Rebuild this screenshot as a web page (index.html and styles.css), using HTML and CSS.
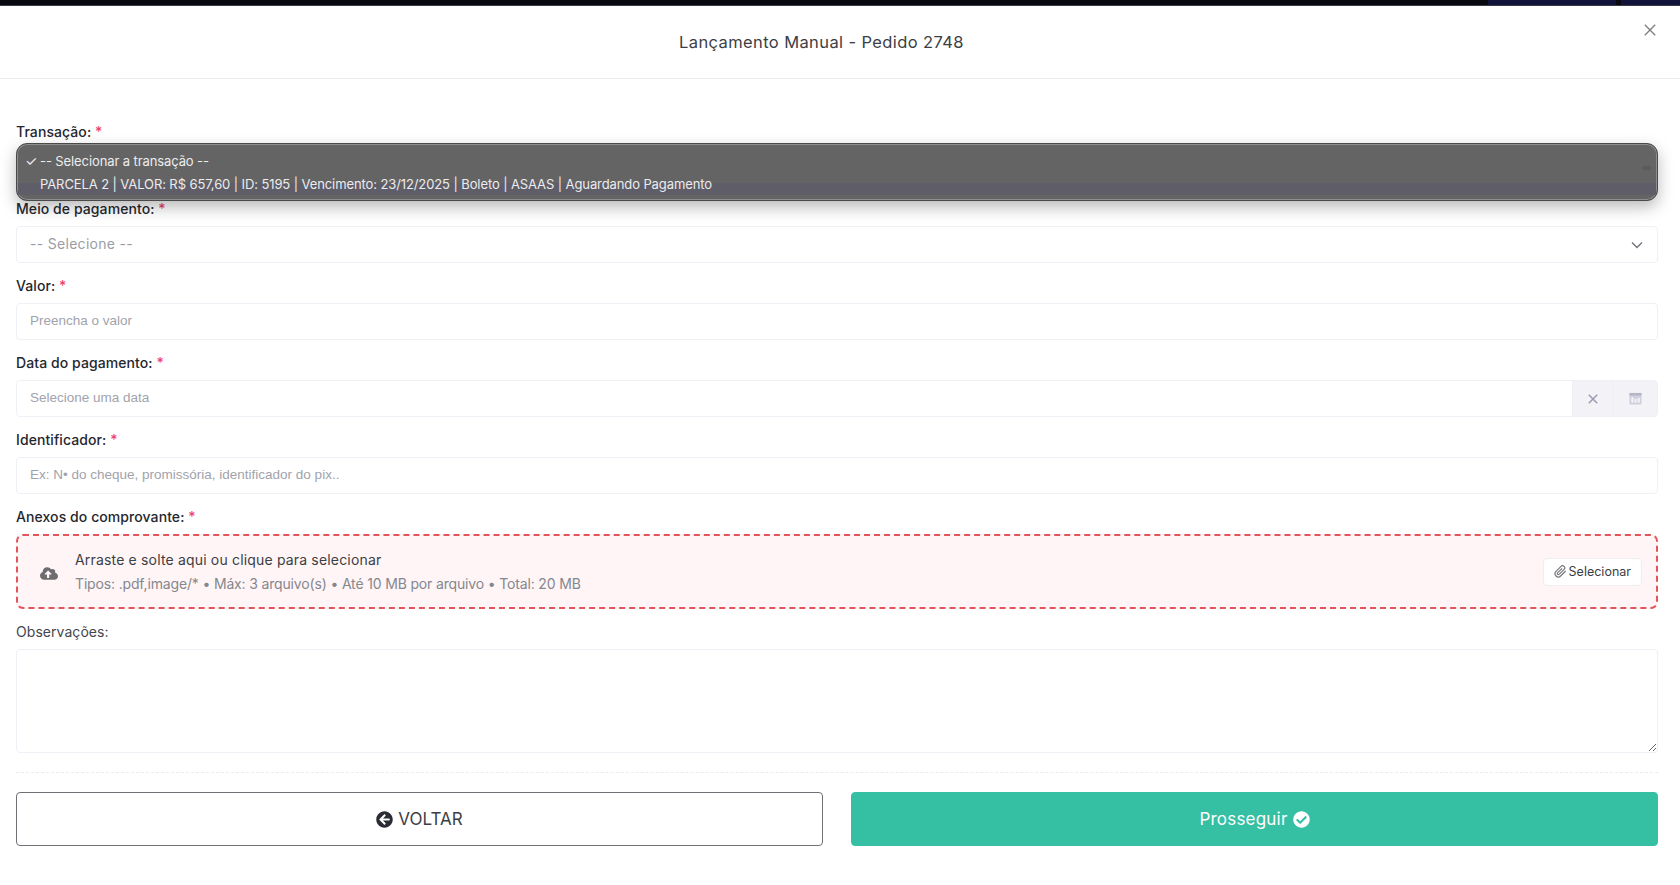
FILE: index.html
```html
<!DOCTYPE html>
<html lang="pt-BR">
<head>
<meta charset="utf-8">
<title>Lançamento Manual</title>
<link rel="stylesheet" href="styles.css">
</head>
<body>
<div class="backdrop-strip">
  <span class="strip-fill"></span>
  <span class="strip-navy strip-navy-a"></span>
  <span class="strip-gap"></span>
  <span class="strip-navy strip-navy-b"></span>
</div>
<header class="modal-header">
  <h1 class="modal-title">Lançamento Manual - Pedido 2748</h1>
  <button class="close-btn" type="button" aria-label="Fechar">
    <svg viewBox="0 0 12 12" width="12" height="12"><path d="M.8.8l10.4 10.4M11.2.8L.8 11.2" fill="none" stroke="#7c7c7c" stroke-width="1.3"/></svg>
  </button>
</header>
<main class="modal-body">
  <div class="field field-first">
    <label class="label">Transação: <span class="req">*</span></label>
    <div class="control"></div>
    <div class="native-menu">
      <div class="menu-row"><span class="menu-check">✓</span>-- Selecionar a transação --</div>
      <div class="menu-row menu-row-hover"><span class="menu-check"></span>PARCELA 2 | VALOR: R$ 657,60 | ID: 5195 | Vencimento: 23/12/2025 | Boleto | ASAAS | Aguardando Pagamento</div>
      <span class="menu-ghost"></span>
    </div>
  </div>
  <div class="field">
    <label class="label">Meio de pagamento: <span class="req">*</span></label>
    <div class="control control-select">
      <span class="select-text">-- Selecione --</span>
      <svg class="chevron" viewBox="0 0 12 8" width="12" height="8"><path d="M1 1.5l5 5 5-5" fill="none" stroke="#6f7178" stroke-width="1.3"/></svg>
    </div>
  </div>
  <div class="field">
    <label class="label">Valor: <span class="req">*</span></label>
    <input class="control input" type="text" placeholder="Preencha o valor">
  </div>
  <div class="field">
    <label class="label">Data do pagamento: <span class="req">*</span></label>
    <div class="date-group">
      <input class="input date-input" type="text" placeholder="Selecione uma data">
      <span class="addon addon-clear">
        <svg viewBox="0 0 10 10" width="10" height="10"><path d="M.8.8l8.4 8.4M9.2.8L.8 9.2" fill="none" stroke="#9a9ab2" stroke-width="1.5"/></svg>
      </span>
      <span class="addon addon-cal">
        <svg viewBox="0 0 14 14" width="13" height="13"><rect x=".5" y="1" width="13" height="12.5" rx="1" fill="#cfcfdd"/><rect x=".5" y="1" width="13" height="2.8" fill="#b5b5c8"/><rect x="2.5" y="5.5" width="2.4" height="6" fill="#f1f1f6"/><rect x="5.9" y="7.5" width="2.4" height="4" fill="#f1f1f6"/><rect x="9.3" y="6.5" width="2.4" height="5" fill="#f1f1f6"/></svg>
      </span>
    </div>
  </div>
  <div class="field">
    <label class="label">Identificador: <span class="req">*</span></label>
    <input class="control input" type="text" placeholder="Ex: N• do cheque, promissória, identificador do pix..">
  </div>
  <div class="field">
    <label class="label">Anexos do comprovante: <span class="req">*</span></label>
    <div class="dropzone">
      <svg class="cloud" viewBox="0 0 640 512" width="18" height="15"><path fill="#6d6d6f" d="M537.6 226.6c4.1-10.7 6.4-22.4 6.4-34.6 0-53-43-96-96-96-19.7 0-38.1 6-53.3 16.2C367 64.2 315.3 32 256 32c-88.4 0-160 71.6-160 160 0 2.7.1 5.4.2 8.1C40.2 219.8 0 273.2 0 336c0 79.5 64.5 144 144 144h368c70.7 0 128-57.3 128-128 0-61.9-44-113.6-102.4-125.4zM393.4 288H328v112c0 8.8-7.2 16-16 16h-48c-8.8 0-16-7.2-16-16V288h-65.4c-14.3 0-21.4-17.2-11.3-27.3l105.4-105.4c6.2-6.2 16.4-6.2 22.6 0l105.4 105.4c10.1 10.1 2.9 27.3-11.3 27.3z"/></svg>
      <div class="drop-text">
        <div class="drop-title">Arraste e solte aqui ou clique para selecionar</div>
        <div class="drop-hint">Tipos: .pdf,image/* • Máx: 3 arquivo(s) • Até 10 MB por arquivo • Total: 20 MB</div>
      </div>
      <button class="pick-btn" type="button">
        <svg viewBox="0 0 24 24" width="13" height="13"><path d="M21.44 11.05l-9.19 9.19a6 6 0 0 1-8.49-8.49l9.19-9.19a4 4 0 0 1 5.66 5.66l-9.2 9.19a2 2 0 0 1-2.83-2.83l8.49-8.48" fill="none" stroke="#77777d" stroke-width="2.2"/></svg>
        <span>Selecionar</span>
      </button>
    </div>
  </div>
  <div class="field field-notes">
    <label class="label label-plain">Observações:</label>
    <textarea class="textarea"></textarea>
  </div>
  <div class="actions">
    <button class="btn btn-back" type="button">
      <svg viewBox="0 0 512 512" width="17" height="17"><path fill="#2a2c34" d="M256 504C119 504 8 393 8 256S119 8 256 8s248 111 248 248-111 248-248 248zm28.9-143.6L209.4 288H392c13.3 0 24-10.7 24-24v-16c0-13.3-10.7-24-24-24H209.4l75.5-72.4c9.7-9.3 9.9-24.8.4-34.3l-11-10.9c-9.4-9.4-24.6-9.4-33.9 0L107.7 239c-9.4 9.4-9.4 24.6 0 33.9l132.7 132.7c9.4 9.4 24.6 9.4 33.9 0l11-10.9c9.5-9.5 9.3-25-.4-34.3z"/></svg>
      <span>VOLTAR</span>
    </button>
    <button class="btn btn-next" type="button">
      <span>Prosseguir</span>
      <svg viewBox="0 0 512 512" width="17" height="17"><path fill="#fff" d="M504 256c0 136.967-111.033 248-248 248S8 392.967 8 256 119.033 8 256 8s248 111.033 248 248zM227.314 387.314l184-184c6.248-6.248 6.248-16.379 0-22.627l-22.627-22.627c-6.248-6.249-16.379-6.249-22.628 0L216 308.118l-70.059-70.059c-6.248-6.248-16.379-6.248-22.628 0l-22.627 22.627c-6.248 6.248-6.248 16.379 0 22.627l104 104c6.249 6.249 16.379 6.249 22.628.001z"/></svg>
    </button>
  </div>
</main>
</body>
</html>
```
FILE: styles.css
```css
* { box-sizing: border-box; }
html, body { margin: 0; height: 100%; }
body {
  background: #fff;
  color: #2b2d35;
  font-family: "Inter", "Liberation Sans", sans-serif;
  overflow: hidden;
}

.backdrop-strip { display: flex; height: 6px; background: #08080f; border-bottom: 1px solid #3a3a40; }
.strip-fill { flex: 1; }
.strip-navy { background: #11133a; }
.strip-navy-a { width: 128px; }
.strip-gap { width: 5px; }
.strip-navy-b { width: 59px; }

.modal-header {
  position: relative;
  height: 73px;
  display: flex;
  align-items: center;
  justify-content: center;
  border-bottom: 1px solid #ececf0;
  padding-right: 37px;
  padding-bottom: 1px;
}
.modal-title { margin: 0; font-size: 16.5px; font-weight: 400; color: #3c3e45; letter-spacing: 0.39px; }
.close-btn {
  position: absolute;
  top: 17px;
  right: 23px;
  width: 14px;
  height: 14px;
  padding: 0;
  border: 0;
  background: none;
  display: flex;
  align-items: center;
  justify-content: center;
}

.modal-body { padding: 44px 22px 0 16px; }

.field { position: relative; margin-bottom: 14px; }
.label {
  display: block;
  height: 18px;
  margin-bottom: 8px;
  font-size: 14px;
  line-height: 18px;
  font-weight: 500;
  color: #25272e;
  letter-spacing: 0.08px;
}
.req { color: #f1416c; }
.label-plain { font-weight: 400; color: #44464e; letter-spacing: 0.05px; }

.control {
  display: block;
  width: 100%;
  height: 37px;
  background: #fff;
  border: 1px solid #eef0f6;
  border-radius: 4px;
}
.control-select { display: flex; align-items: center; justify-content: space-between; padding: 0 14px 3px 13px; }
.select-text { font-size: 14px; color: #9a9ca5; letter-spacing: 0.3px; }
.chevron { display: block; margin-top: 3px; }

.input {
  padding: 0 13px 3px;
  font-family: "Liberation Sans", sans-serif;
  font-size: 13.5px;
  outline: none;
}
.input::placeholder { color: #a1a3ac; opacity: 1; }

.date-group { display: flex; height: 37px; border: 1px solid #eef0f6; border-radius: 4px; overflow: hidden; }
.date-input { flex: 1; min-width: 0; border: 0; }
.addon { display: flex; align-items: center; justify-content: center; background: #f3f3f7; border-left: 1px solid #eeeef3; }
.addon-clear { width: 40px; }
.addon-cal { width: 45px; }

.native-menu {
  position: absolute;
  top: 20px;
  left: 0;
  right: 0;
  height: 58px;
  padding-top: 5px;
  background: #646464;
  border: 1px solid #4a4a4a;
  border-radius: 11px;
  box-shadow: inset 0 0 0 1px #8e8e90, 0 6px 16px rgba(0, 0, 0, .28);
  overflow: hidden;
  z-index: 5;
}
.menu-row {
  display: flex;
  align-items: center;
  height: 23px;
  padding: 0 8px;
  font-family: "Inter", "Liberation Sans", sans-serif;
  font-size: 13px;
  letter-spacing: -0.1px;
  color: #ececec;
}
.menu-row-hover { background: linear-gradient(to bottom, #646464 0 50%, #5e5d68 50% 100%); margin: 0 1px; padding: 0 7px; }
.menu-check { width: 15px; flex: none; font-size: 14px; }
.menu-ghost { position: absolute; top: 22px; right: 6px; width: 8px; height: 4px; background: #5b5b5b; }

.dropzone {
  display: flex;
  align-items: center;
  height: 75px;
  padding: 0 14px 0 22px;
  background: #fff5f6;
  border: 2px dashed #e2555a;
  border-radius: 7px;
}
.cloud { flex: none; margin-top: 4px; }
.drop-text { flex: 1; margin-left: 17px; }
.drop-title { font-size: 14px; line-height: 20px; color: #3c3e45; margin-bottom: 4px; letter-spacing: 0.17px; }
.drop-hint { font-size: 14px; line-height: 20px; color: #85878f; letter-spacing: -0.16px; }
.pick-btn {
  display: flex;
  align-items: center;
  gap: 2px;
  height: 28px;
  padding: 0 10px;
  background: #fff;
  border: 1px solid #f0ecef;
  border-radius: 4px;
  font-family: "Inter", sans-serif;
  font-size: 12.5px;
  color: #3c3e45;
}

.field-notes { margin-bottom: 0; }
.textarea {
  display: block;
  width: 100%;
  height: 104px;
  margin-top: 1px;
  background: #fff;
  border: 1px solid #eef0f6;
  border-radius: 4px;
  outline: none;
  resize: vertical;
}

.actions {
  display: flex;
  gap: 28px;
  margin-top: 19px;
  padding-top: 19px;
  border-top: 1px dashed #ececf0;
}
.btn {
  flex: 1;
  display: flex;
  align-items: center;
  justify-content: center;
  gap: 5px;
  height: 54px;
  border-radius: 4px;
  font-family: "Inter", sans-serif;
  font-size: 17px;
}
.btn-back { background: #fff; border: 1px solid #6f7075; color: #3c3e45; }
.btn-next { background: #35bfa3; border: 1px solid #35bfa3; color: #fff; letter-spacing: 0.2px; }
```
